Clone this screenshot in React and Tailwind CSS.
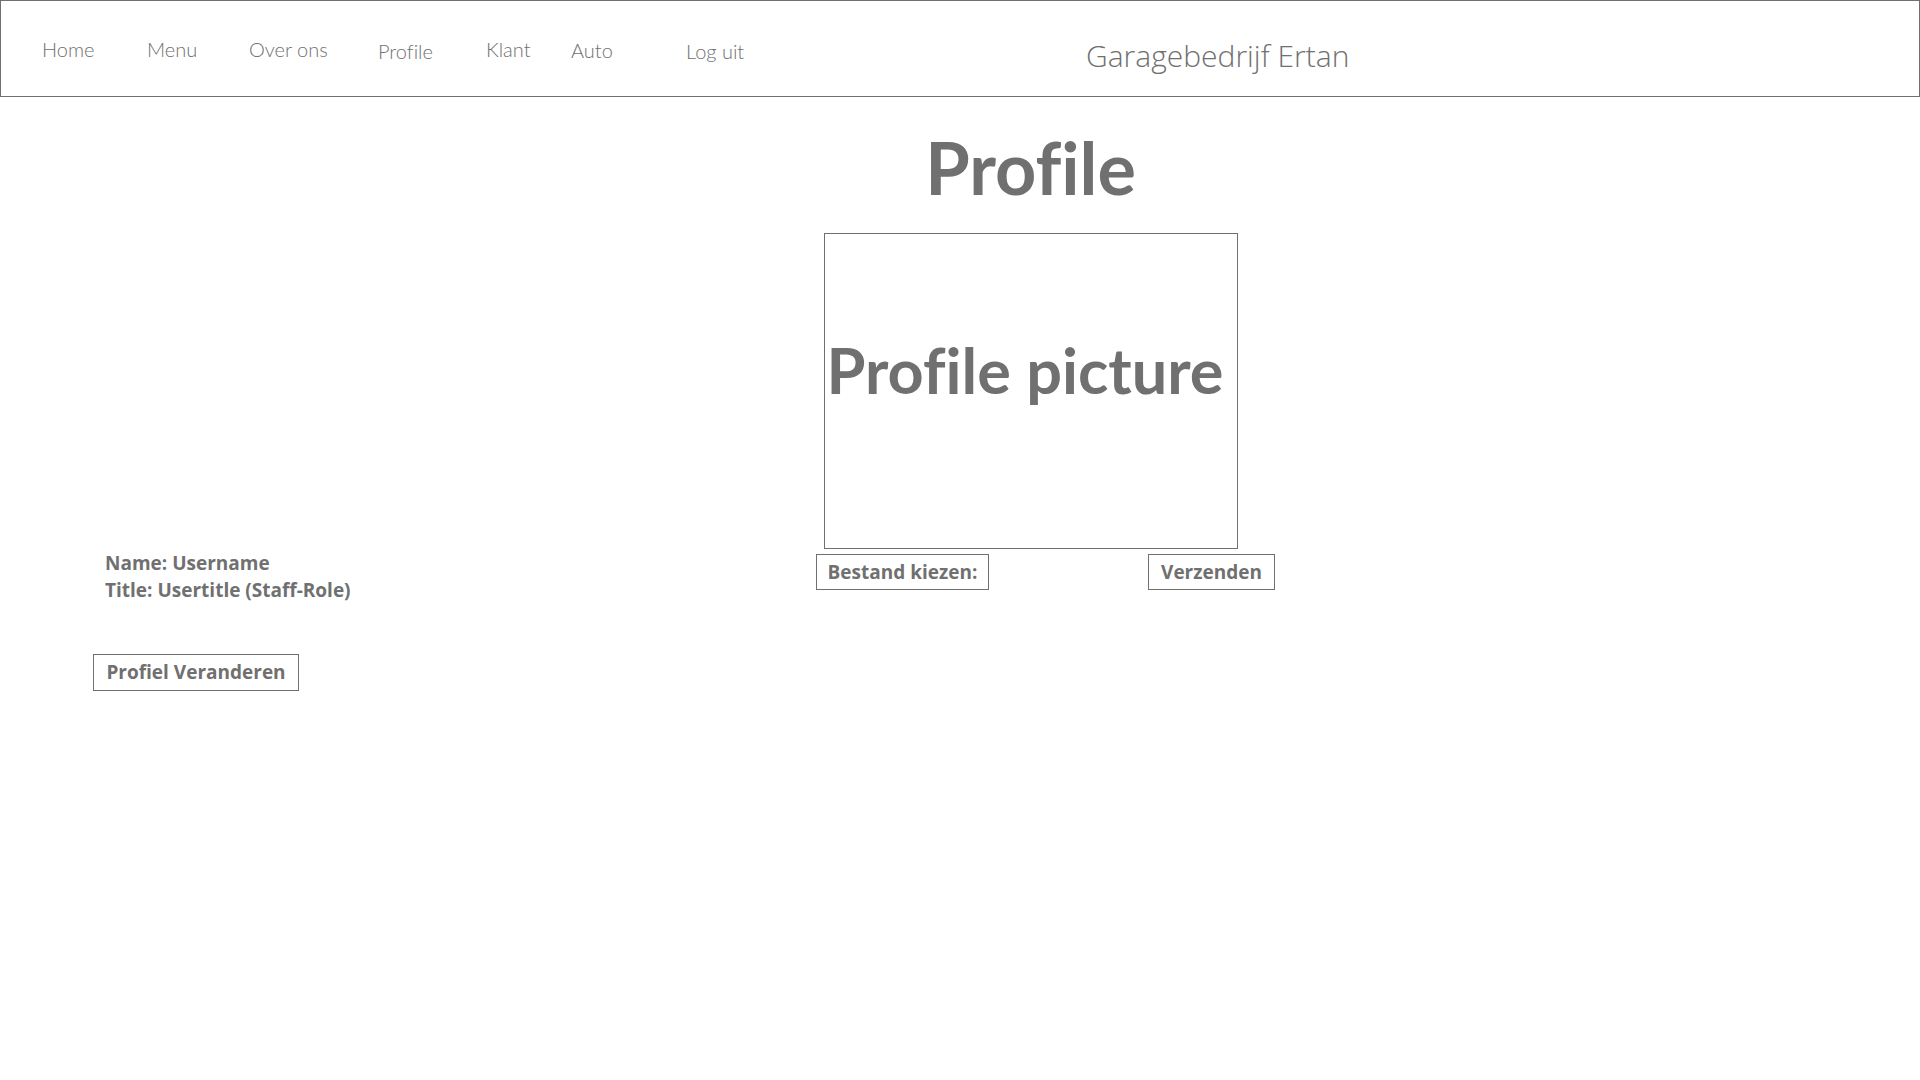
import React from 'react';

// Navigatie items met vaste celbreedte (zoals in het ontwerp)
const NAV = [
  { label: 'Home', w: 'w-[105px]', mt: 'mt-[38px]' },
  { label: 'Menu', w: 'w-[102px]', mt: 'mt-[38px]' },
  { label: 'Over ons', w: 'w-[129px]', mt: 'mt-[38px]' },
  { label: 'Profile', w: 'w-[108px]', mt: 'mt-[40px]' },
  { label: 'Klant', w: 'w-[85px]', mt: 'mt-[38px]' },
  { label: 'Auto', w: 'w-[115px]', mt: 'mt-[39px]' },
  { label: 'Log uit', w: 'w-[400px]', mt: 'mt-[40px]' },
];

const SANS = { fontFamily: '"Open Sans", Lato, sans-serif' };

function Header() {
  return (
    <header className="flex h-[97px] items-start border border-[#707070] pl-[41px]">
      {NAV.map((item) => (
        <a
          key={item.label}
          href="#"
          className={`${item.w} ${item.mt} shrink-0 text-[20px] font-light leading-none [font-variant-ligatures:none]`}
        >
          {item.label}
        </a>
      ))}
      <div className="mt-[40px] text-[30px] font-light leading-none" style={SANS}>
        Garagebedrijf Ertan
      </div>
    </header>
  );
}

export default function App() {
  return (
    <div
      className="min-h-screen bg-white text-[#707070]"
      style={{ fontFamily: 'Lato, "Open Sans", sans-serif' }}
    >
      <Header />

      <main className="flex flex-col">
        {/* Titel + profielfoto */}
        <section className="pl-[824px] pt-[34px]">
          <div className="w-[413px]">
            <h1 className="whitespace-nowrap text-center text-[72px] font-bold leading-none [font-variant-ligatures:none]">
              Profile
            </h1>
            <div className="mt-[30px] flex h-[316px] w-[414px] justify-center border border-[#707070] pr-[12px] pt-[104px]">
              <span className="whitespace-nowrap text-[63px] font-bold leading-none [font-variant-ligatures:none]">
                Profile picture
              </span>
            </div>
          </div>
        </section>

        {/* Gegevens + knoppen */}
        <section className="mt-[5px] flex" style={SANS}>
          <div className="w-[816px] shrink-0 pl-[93px]">
            <div className="-mt-[4px] pl-[12px] text-[19px] font-bold leading-[27px]">
              <p>Name: Username</p>
              <p>Title: Usertitle (Staff-Role)</p>
            </div>
            <button className="mt-[50px] flex h-[37px] w-[206px] items-center justify-center border border-[#707070] text-[19px] font-bold">
              Profiel Veranderen
            </button>
          </div>
          <div className="flex w-[459px] shrink-0 items-start justify-between">
            <button className="flex h-[36px] w-[173px] items-center justify-center border border-[#707070] text-[19px] font-bold">
              Bestand kiezen:
            </button>
            <button className="flex h-[36px] w-[127px] items-center justify-center border border-[#707070] text-[19px] font-bold">
              Verzenden
            </button>
          </div>
        </section>
      </main>
    </div>
  );
}
